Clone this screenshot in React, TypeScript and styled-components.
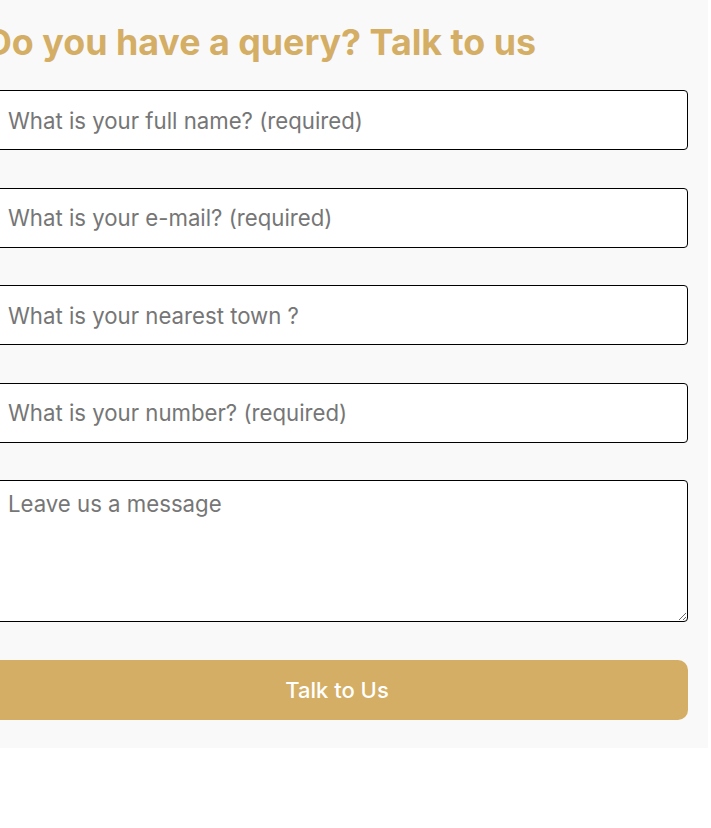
import React from "react"
import styled, { createGlobalStyle } from "styled-components"

const GlobalStyle = createGlobalStyle`
  html, body {
    margin: 0;
    padding: 0;
    background: #ffffff;
    overflow: hidden;
  }

  * {
    box-sizing: border-box;
  }
`

const gold = "#d4ae64"

const fields = [
  { name: "name", type: "text", placeholder: "What is your full name? (required)" },
  { name: "email", type: "email", placeholder: "What is your e-mail? (required)" },
  { name: "town", type: "text", placeholder: "What is your nearest town ?" },
  { name: "phone", type: "tel", placeholder: "What is your number? (required)" },
]

export default function App() {
  return (
    <>
      <GlobalStyle />
      <Section>
        <Title>Do you have a query? Talk to us</Title>
        <Form onSubmit={(e) => e.preventDefault()}>
          {fields.map((f) => (
            <Input key={f.name} name={f.name} type={f.type} placeholder={f.placeholder} />
          ))}
          <Message name="message" placeholder="Leave us a message" />
          <Submit type="submit">Talk to Us</Submit>
        </Form>
      </Section>
    </>
  )
}

const Section = styled.section`
  width: 743px;
  margin-left: -35px;
  padding: 20px 20px 28px 21px;
  background-color: #f9f9f9;
  font-family: Inter, "Noto Sans", sans-serif;
`

const Title = styled.h2`
  margin: 0 0 26px;
  color: ${gold};
  font-size: 35.8px;
  font-weight: 700;
  line-height: 44px;
  white-space: nowrap;
`

const Form = styled.form`
  display: flex;
  flex-direction: column;
  gap: 37.5px;
`

const fieldStyles = `
  display: block;
  width: 100%;
  padding: 0 21px;
  border: 1px solid #000000;
  border-radius: 4px;
  background: #ffffff;
  font-family: Inter, "Noto Sans", sans-serif;
  font-size: 22.2px;
  font-weight: 400;
  color: #222222;
  outline: none;

  &::placeholder {
    color: #767676;
  }
`

const Input = styled.input`
  ${fieldStyles}
  height: 60px;
`

const Message = styled.textarea`
  ${fieldStyles}
  height: 142px;
  padding-top: 10px;
  resize: vertical;
  line-height: 1.2;
`

const Submit = styled.button`
  height: 60px;
  border: none;
  border-radius: 10px;
  background-color: ${gold};
  color: #ffffff;
  font-family: Inter, "Noto Sans", sans-serif;
  font-size: 22px;
  font-weight: 500;
  cursor: pointer;
`
